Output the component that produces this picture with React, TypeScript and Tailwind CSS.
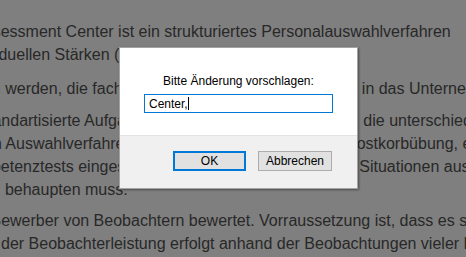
import React from "react";

const paragraphs: { mt: string; lines: { ml: string; text: string }[] }[] = [
  {
    mt: "mt-[20px]",
    lines: [
      { ml: "ml-[-58px]", text: "Das Assessment Center ist ein strukturiertes Personalauswahlverfahren" },
      { ml: "ml-[-38px]", text: "individuellen Stärken (Kompetenzen) eines Bewerbers." },
    ],
  },
  {
    mt: "mt-[11px]",
    lines: [
      { ml: "ml-[-66px]", text: "gefunden werden, die fachlich sowie persönlich am ehesten in das Unternehmen passen." },
    ],
  },
  {
    mt: "mt-[9px]",
    lines: [
      { ml: "ml-[-20px]", text: "standartisierte Aufgaben in Form von Übungen erfüllt, die unterschiedliche Kompetenzen abfragen." },
      { ml: "ml-[-16px]", text: "Im Auswahlverfahren kommen beispielsweise eine Postkorbübung, eine Gruppendiskussion" },
      { ml: "ml-[-41px]", text: "Kompetenztests eingesetzt, in denen der Bewerber sich Situationen ausgesetzt sieht und" },
      { ml: "ml-[-28px]", text: "sich behaupten muss." },
    ],
  },
  {
    mt: "mt-[8px]",
    lines: [
      { ml: "ml-[-38px]", text: "Die Bewerber von Beobachtern bewertet. Vorraussetzung ist, dass es sich" },
      { ml: "ml-[1px]", text: "der Beobachterleistung erfolgt anhand der Beobachtungen vieler Beobachter." },
    ],
  },
];

function PromptDialog() {
  return (
    <div className="absolute left-[119px] top-[47px] w-[239px] h-[142px] flex flex-col bg-white border border-[#a3a3a3] shadow-[1px_1px_2px_rgba(0,0,0,0.4)] font-['Liberation_Sans',Arial,sans-serif] text-[12px] text-black">
      <div className="flex flex-col items-center pt-[26px] h-[87px]">
        <div className="leading-[14px]">Bitte Änderung vorschlagen:</div>
        <div className="mt-[6px] w-[189px] h-[19px] border border-[#0078d7] flex items-center pl-[4px] leading-[14px]">
          <span>Center,</span>
          <span className="w-px h-[13px] bg-black" />
        </div>
      </div>
      <div className="flex-1 bg-[#f0f0f0] border-t border-[#e3e3e3] flex justify-end items-start gap-[12px] pt-[15px] pr-[25px]">
        <button className="w-[73px] h-[20px] border-2 border-[#0078d7] bg-[#e1e1e1] leading-[16px]">OK</button>
        <button className="w-[74px] h-[20px] border border-[#adadad] bg-[#e1e1e1] leading-[18px]">Abbrechen</button>
      </div>
    </div>
  );
}

export default function App() {
  return (
    <div className="relative w-[466px] h-[257px] overflow-hidden bg-[#7f7f7f]">
      <div className="font-['Liberation_Sans',Arial,sans-serif] text-[16px] leading-[23px] text-[#282828]">
        {paragraphs.map((p, i) => (
          <div key={i} className={p.mt}>
            {p.lines.map((l, j) => (
              <div key={j} className={`whitespace-nowrap ${l.ml}`}>
                {l.text}
              </div>
            ))}
          </div>
        ))}
      </div>
      <PromptDialog />
    </div>
  );
}
